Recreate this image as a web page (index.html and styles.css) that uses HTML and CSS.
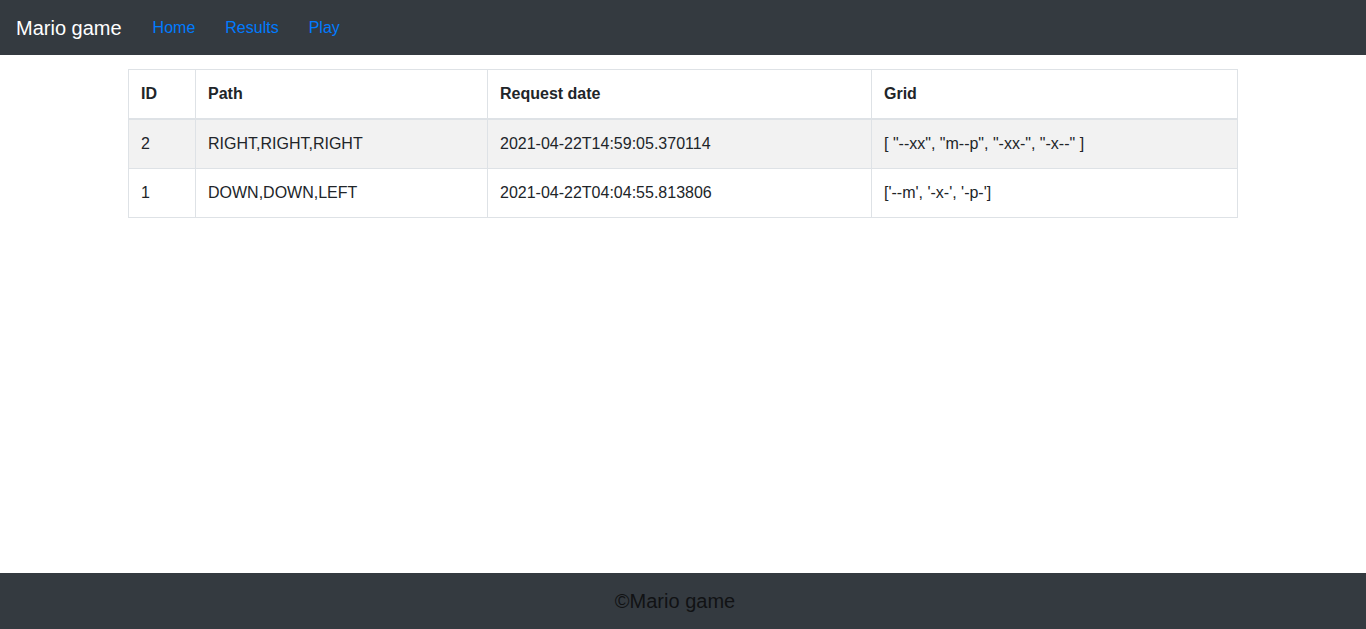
FILE: index.html
```html
<!DOCTYPE html>
<html lang="en">
<head>
<meta charset="utf-8">
<title>Mario game</title>
<link rel="stylesheet" href="styles.css">
</head>
<body>
<nav class="navbar">
  <a class="brand" href="#">Mario game</a>
  <ul class="nav">
    <li><a class="nav-link" href="#">Home</a></li>
    <li><a class="nav-link" href="#">Results</a></li>
    <li><a class="nav-link" href="#">Play</a></li>
  </ul>
</nav>
<main class="container">
  <table class="results">
    <colgroup>
      <col class="c-id"><col class="c-path"><col class="c-date"><col class="c-grid">
    </colgroup>
    <thead>
      <tr><th>ID</th><th>Path</th><th>Request date</th><th>Grid</th></tr>
    </thead>
    <tbody>
      <tr><td>2</td><td>RIGHT,RIGHT,RIGHT</td><td>2021-04-22T14:59:05.370114</td><td>[ "--xx", "m--p", "-xx-", "-x--" ]</td></tr>
      <tr><td>1</td><td>DOWN,DOWN,LEFT</td><td>2021-04-22T04:04:55.813806</td><td>['--m', '-x-', '-p-']</td></tr>
    </tbody>
  </table>
</main>
<footer class="footer">©Mario game</footer>
</body>
</html>
```
FILE: styles.css
```css
* { box-sizing: border-box; }
html, body { margin: 0; padding: 0; }
body {
  font-family: "Liberation Sans", Arial, sans-serif;
  font-size: 16px;
  line-height: 1.5;
  color: #212529;
  background: #fff;
  min-height: 629px;
}
.navbar {
  display: flex;
  align-items: center;
  height: 55px;
  padding: 0 16px;
  background: #343a40;
}
.brand {
  color: #fff;
  font-size: 20px;
  text-decoration: none;
  margin-right: 31px;
  line-height: 30px;
}
.nav {
  display: flex;
  gap: 30px;
  list-style: none;
  margin: 0;
  padding: 0;
}
.nav-link {
  color: #007bff;
  text-decoration: none;
  font-size: 16px;
}
.container {
  width: 1140px;
  margin: 0 auto;
  padding: 14px 15px 0;
}
.results {
  width: 1109px;
  border-collapse: collapse;
  table-layout: fixed;
}
.c-id { width: 67px; }
.c-path { width: 292px; }
.c-date { width: 384px; }
.c-grid { width: 366px; }
.results th, .results td {
  border: 1px solid #dee2e6;
  padding: 12px;
  text-align: left;
  vertical-align: top;
}
.results th { font-weight: bold; }
.results thead th { border-bottom: 2px solid #dee2e6; }
.results tbody tr:nth-child(odd) { background: #f2f2f2; }
.footer {
  position: fixed;
  left: 0;
  right: 0;
  bottom: 0;
  height: 56px;
  padding-right: 16px;
  background: #343a40;
  color: #111214;
  font-size: 20px;
  display: flex;
  align-items: center;
  justify-content: center;
}
```
